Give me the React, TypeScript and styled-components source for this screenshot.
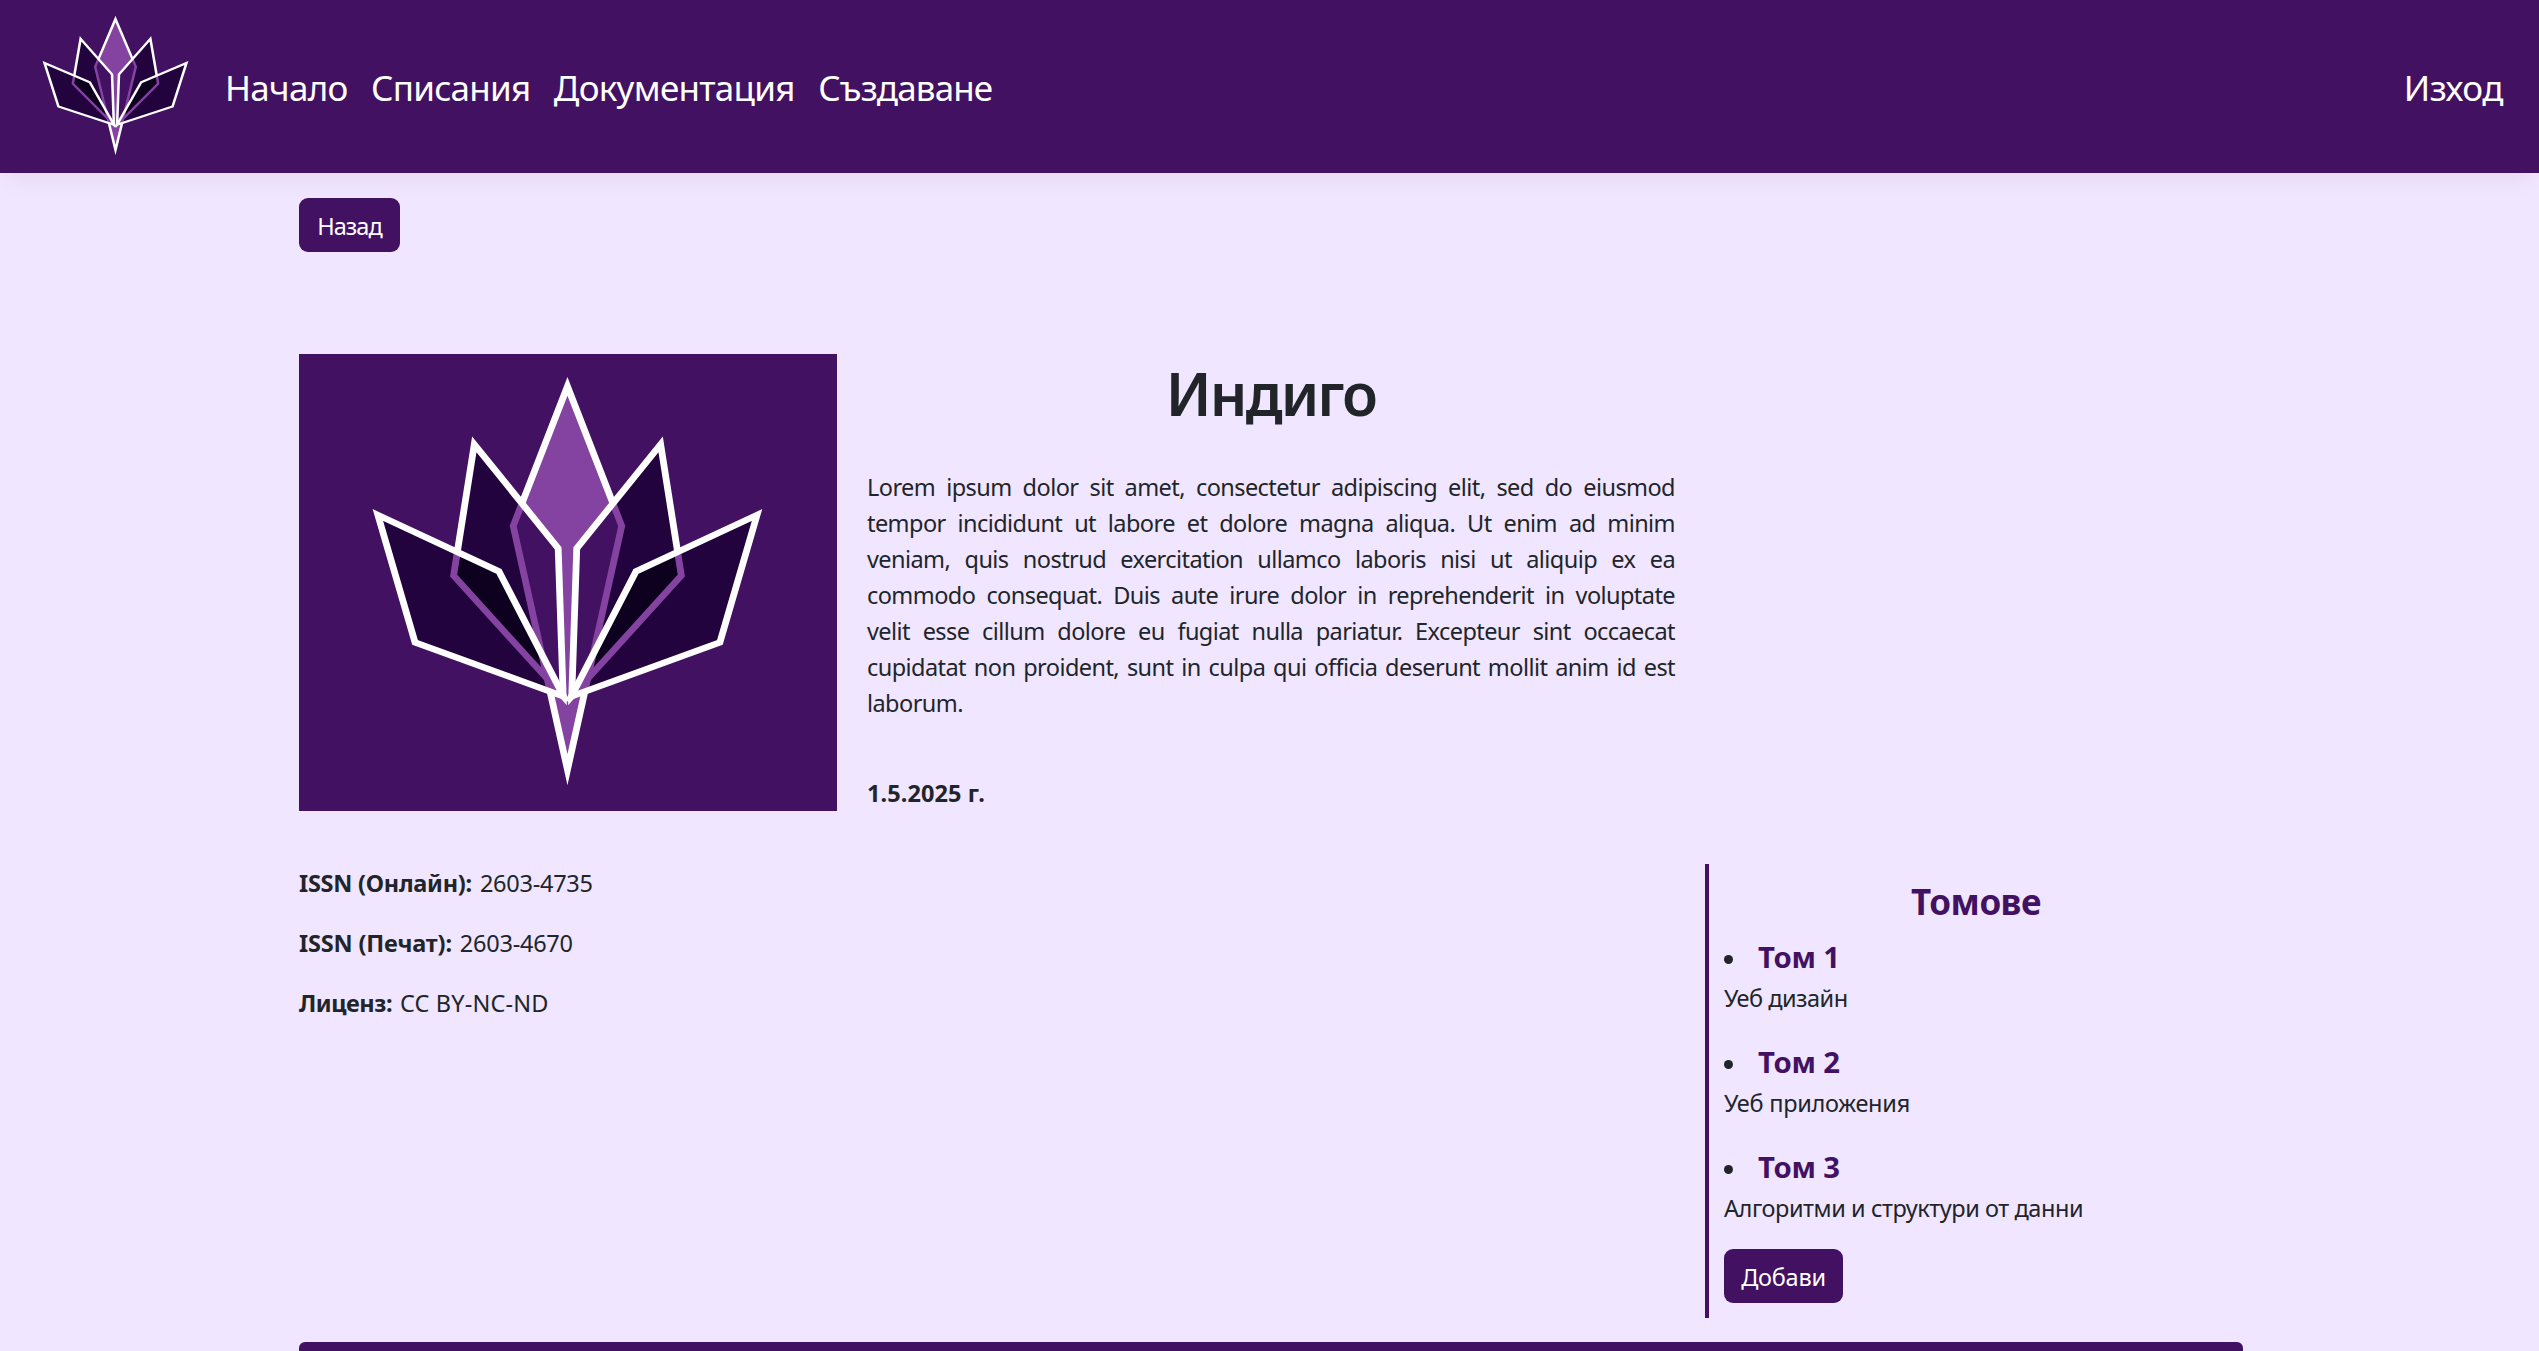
import React, { useId } from "react";
import styled, { createGlobalStyle } from "styled-components";

const indigo = "#431162";
const petalDark = "#22033d";
const petalDarkest = "#0e001f";
const orchid = "#8443a0";

const GlobalStyle = createGlobalStyle`
  * { box-sizing: border-box; }
  html, body { margin: 0; height: 100%; overflow: hidden; }
  body {
    background: #f0e6ff;
    color: #212529;
    font: 400 23.5px/36px "Noto Sans", "Open Sans", sans-serif;
  }
  h1, h2, h3, p, ul { margin: 0; padding: 0; }
`;

const Navbar = styled.nav`
  display: flex;
  align-items: center;
  height: 173px;
  padding: 0 36px 0 14.6px;
  background: ${indigo};
  box-shadow: 0 12px 24px -8px rgba(0, 0, 0, 0.07);
`;

const NavLogo = styled.div`
  width: 201.4px;
  height: 156px;
  margin: 0 9px 1px 0;
  flex: none;
`;

const NavLinks = styled.div`
  display: flex;
  flex: 1;
  gap: 23.4px;
`;

const NavLink = styled.a<{ $tracking: number }>`
  padding-top: 2px;
  color: #fff;
  font-size: 35px;
  line-height: 54px;
  letter-spacing: ${(p) => p.$tracking}px;
  text-decoration: none;
`;

const Page = styled.main`
  width: 1944px;
  margin-left: 299px;
  padding-top: 25px;
`;

const Button = styled.button<{ $width: number; $tracking: number }>`
  display: block;
  width: ${(p) => p.$width}px;
  height: 54px;
  padding: 2px 0 0;
  border: 0;
  border-radius: 9px;
  background: ${indigo};
  color: #fff;
  font: inherit;
  letter-spacing: ${(p) => p.$tracking}px;
  text-align: center;
`;

const Grid = styled.section<{ $top: number }>`
  display: grid;
  grid-template-columns: 538px 808px 538px;
  column-gap: 30px;
  margin-top: ${(p) => p.$top}px;
`;

const Cover = styled.div`
  height: 457px;
  background: ${indigo};
`;

const Summary = styled.div`
  padding-top: 3px;
`;

const Title = styled.h1`
  font-size: 59px;
  font-weight: 600;
  line-height: 72px;
  letter-spacing: -1.9px;
  text-align: center;
`;

const Description = styled.p`
  margin-top: 40px;
  letter-spacing: -0.57px;
  word-spacing: 1.7px;
  text-align: justify;
`;

const PublishedOn = styled.p`
  margin-top: 54px;
  font-weight: 700;
  letter-spacing: 0.1px;
`;

const Details = styled.div`
  grid-column: 1 / 3;
  display: flex;
  flex-direction: column;
  gap: 24px;
  padding-top: 1px;
`;

const Detail = styled.p<{ $tracking: number }>`
  display: flex;
  gap: 8px;
  letter-spacing: ${(p) => p.$tracking}px;
`;

const DetailLabel = styled.strong<{ $tracking: number }>`
  font-weight: 700;
  letter-spacing: ${(p) => p.$tracking}px;
`;

const Sidebar = styled.aside`
  height: 454px;
  padding: 16px 15px 15px;
  border-left: 4px solid ${indigo};
`;

const SidebarTitle = styled.h2`
  margin-bottom: 11px;
  color: ${indigo};
  font-size: 35px;
  font-weight: 700;
  line-height: 44px;
  letter-spacing: -0.5px;
  text-align: center;
`;

const VolumeList = styled.ul`
  display: flex;
  flex-direction: column;
  gap: 24px;
  margin-bottom: 23px;
  list-style: none;
`;

const VolumeHeading = styled.h3`
  display: flex;
  align-items: center;
  gap: 25px;
  color: ${indigo};
  font-size: 29.3px;
  font-weight: 700;
  line-height: 45px;
  letter-spacing: -0.2px;

  &::before {
    content: "";
    width: 9px;
    height: 9px;
    margin-top: 4px;
    border-radius: 50%;
    background: #212529;
  }
`;

const VolumeText = styled.p<{ $tracking: number }>`
  letter-spacing: ${(p) => p.$tracking}px;
`;

const Footer = styled.footer`
  height: 60px;
  margin-top: 24px;
  border-radius: 6px;
  background: ${indigo};
`;

const LogoSvg = styled.svg`
  display: block;
  width: 100%;
  height: 100%;
`;

const BUD = "M777 124 L929 543 L777 1274 L625 543 Z";
const MIDDLE = "M516 298 L751 610 L765 1054 L458 692 Z";
const OUTER = "M246 510 L585 679 L766 1054 L350 892 Z";

function PetalPair({ id }: { id: string }) {
  const middleClip = `${id}-middle`;
  const outerClip = `${id}-outer`;
  return (
    <>
      <path d={MIDDLE} fill={petalDark} />
      <g clipPath={`url(#${middleClip})`}>
        <path d={BUD} fill={indigo} stroke={orchid} />
      </g>
      <path d={MIDDLE} stroke="#fff" />
      <path d={OUTER} fill={petalDark} />
      <g clipPath={`url(#${outerClip})`}>
        <path d={MIDDLE} fill={petalDarkest} stroke={orchid} />
        <path d={BUD} stroke={orchid} />
      </g>
      <path d={OUTER} stroke="#fff" />
    </>
  );
}

function Logo() {
  const id = useId().replace(/[^a-zA-Z0-9]/g, "");
  return (
    <LogoSvg viewBox="25 27 1507 1371" preserveAspectRatio="none" fill="none" strokeWidth={19} strokeMiterlimit={12}>
      <defs>
        <clipPath id={`${id}-middle`}>
          <path d={MIDDLE} />
        </clipPath>
        <clipPath id={`${id}-outer`}>
          <path d={OUTER} />
        </clipPath>
      </defs>
      <path d={BUD} fill={orchid} stroke="#fff" />
      <PetalPair id={id} />
      <g transform="translate(1554 0) scale(-1 1)">
        <PetalPair id={id} />
      </g>
    </LogoSvg>
  );
}

const links = [
  { label: "Начало", tracking: -0.7 },
  { label: "Списания", tracking: -0.76 },
  { label: "Документация", tracking: -0.71 },
  { label: "Създаване", tracking: -0.88 },
];

const details = [
  { label: "ISSN (Онлайн):", labelTracking: -0.25, value: "2603-4735", tracking: -0.25 },
  { label: "ISSN (Печат):", labelTracking: -0.15, value: "2603-4670", tracking: -0.25 },
  { label: "Лиценз:", labelTracking: -0.45, value: "CC BY-NC-ND", tracking: 0.15 },
];

const volumes = [
  { name: "Том 1", text: "Уеб дизайн", tracking: -0.5 },
  { name: "Том 2", text: "Уеб приложения", tracking: -0.25 },
  { name: "Том 3", text: "Алгоритми и структури от данни", tracking: -0.43 },
];

export default function App() {
  return (
    <>
      <GlobalStyle />
      <Navbar>
        <NavLogo>
          <Logo />
        </NavLogo>
        <NavLinks>
          {links.map((l) => (
            <NavLink key={l.label} $tracking={l.tracking}>
              {l.label}
            </NavLink>
          ))}
        </NavLinks>
        <NavLink $tracking={-0.5}>Изход</NavLink>
      </Navbar>
      <Page>
        <Button $width={101} $tracking={-0.93}>
          Назад
        </Button>
        <Grid $top={102}>
          <Cover>
            <Logo />
          </Cover>
          <Summary>
            <Title>Индиго</Title>
            <Description>
              Lorem ipsum dolor sit amet, consectetur adipiscing elit, sed do eiusmod tempor incididunt ut labore et
              dolore magna aliqua. Ut enim ad minim veniam, quis nostrud exercitation ullamco laboris nisi ut aliquip
              ex ea commodo consequat. Duis aute irure dolor in reprehenderit in voluptate velit esse cillum dolore eu
              fugiat nulla pariatur. Excepteur sint occaecat cupidatat non proident, sunt in culpa qui officia deserunt
              mollit anim id est laborum.
            </Description>
            <PublishedOn>1.5.2025 г.</PublishedOn>
          </Summary>
        </Grid>
        <Grid $top={53}>
          <Details>
            {details.map((d) => (
              <Detail key={d.label} $tracking={d.tracking}>
                <DetailLabel $tracking={d.labelTracking}>{d.label}</DetailLabel>
                <span>{d.value}</span>
              </Detail>
            ))}
          </Details>
          <Sidebar>
            <SidebarTitle>Томове</SidebarTitle>
            <VolumeList>
              {volumes.map((v) => (
                <li key={v.name}>
                  <VolumeHeading>{v.name}</VolumeHeading>
                  <VolumeText $tracking={v.tracking}>{v.text}</VolumeText>
                </li>
              ))}
            </VolumeList>
            <Button $width={119} $tracking={-0.25}>
              Добави
            </Button>
          </Sidebar>
        </Grid>
        <Footer />
      </Page>
    </>
  );
}
